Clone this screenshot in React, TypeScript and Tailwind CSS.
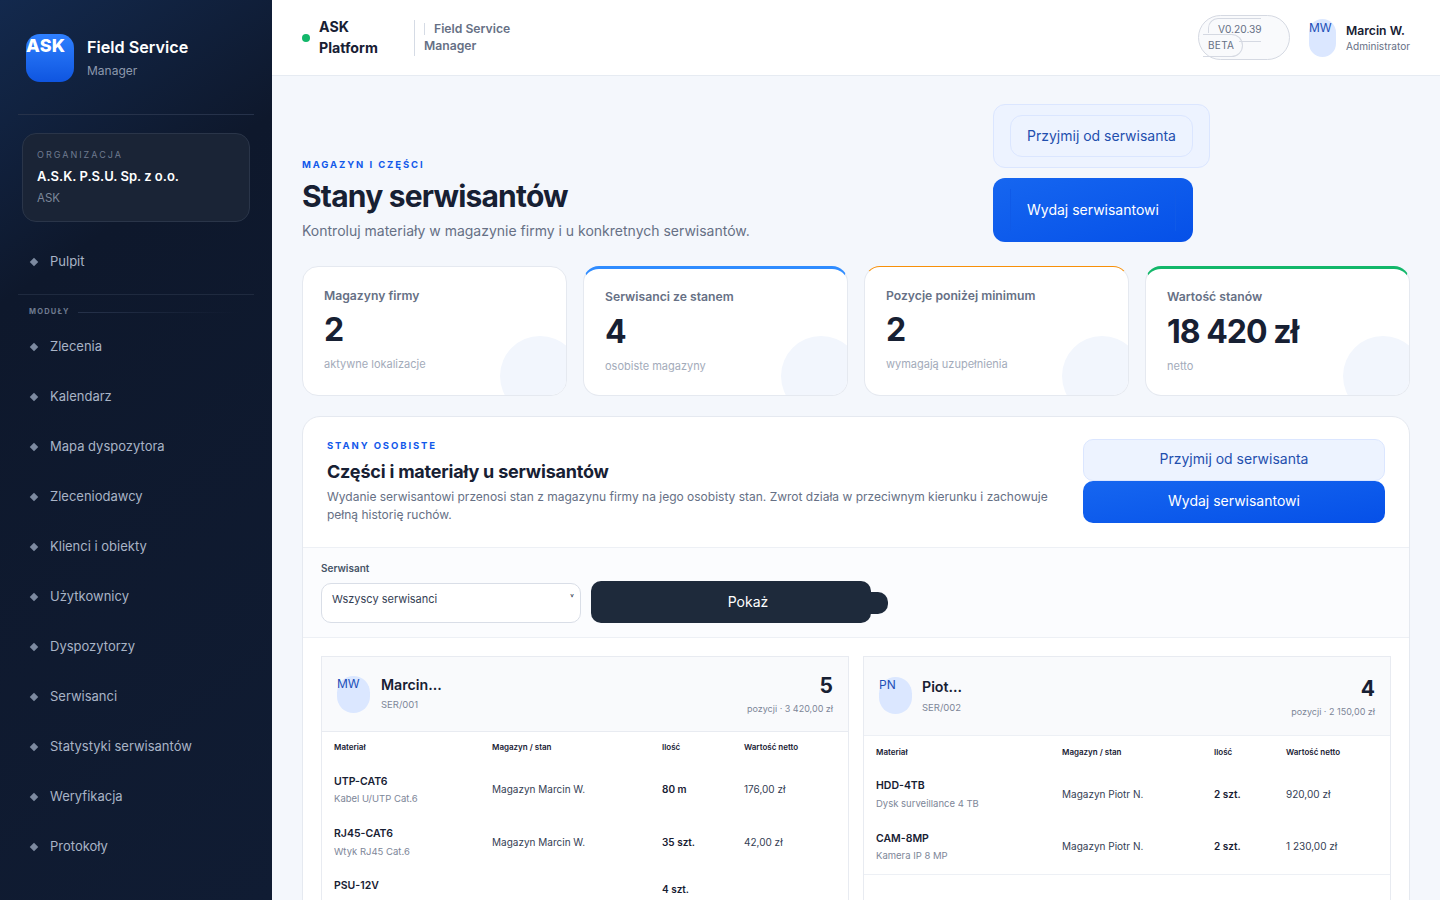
const NAV = [
  "Zlecenia",
  "Kalendarz",
  "Mapa dyspozytora",
  "Zleceniodawcy",
  "Klienci i obiekty",
  "Użytkownicy",
  "Dyspozytorzy",
  "Serwisanci",
  "Statystyki serwisantów",
  "Weryfikacja",
  "Protokoły",
];

const NavItem = ({ label }: { label: string }) => (
  <div className="flex h-[50px] items-center gap-[13px] pl-[13px] text-[13px] text-[#a9b4c6]">
    <span className="h-[6px] w-[6px] rotate-45 bg-[#7d8aa0]" />
    {label}
  </div>
);

const Sidebar = () => (
  <aside className="h-[900px] w-[272px] shrink-0 overflow-hidden bg-[linear-gradient(145deg,#13294d_0%,#0e182c_28%,#101c33_100%)] px-[18px]">
    <div className="flex h-[115px] items-start gap-[13px] border-b border-[#26324a] pl-2 pt-[34px]">
      <div className="h-12 w-12 rounded-[14px] bg-gradient-to-b from-[#2f80ff] to-[#0f55e0] text-[18px] font-extrabold leading-[23px] tracking-[0.2px] text-white">
        ASK
      </div>
      <div>
        <div className="mt-[1px] text-[16.2px] font-semibold leading-[24px] text-white">Field Service</div>
        <div className="mt-[4px] text-[12px] leading-[16px] text-[#8d99ad]">Manager</div>
      </div>
    </div>
    <div className="mx-1 mt-[18px] h-[89px] rounded-[14px] border border-[#2a3549] bg-[#1a2436] px-[14px] pt-[14px]">
      <div className="text-[9px] leading-[14px] tracking-[2px] text-[#6f7b90]">ORGANIZACJA</div>
      <div className="mt-[5px] text-[13px] font-semibold leading-[18px] text-white">A.S.K. P.S.U. Sp. z o.o.</div>
      <div className="mt-[5px] text-[11.5px] leading-[16px] text-[#7d889b]">ASK</div>
    </div>
    <div className="mt-[15px] border-b border-[#1f2a3f] pb-[7px]">
      <NavItem label="Pulpit" />
    </div>
    <div className="flex h-[34px] items-center gap-2 pl-[11px]">
      <span className="text-[7.5px] font-bold tracking-[1.2px] text-[#6f7b90]">MODUŁY</span>
      <span className="h-px w-[160px] bg-gradient-to-r from-[#26324a] to-transparent" />
    </div>
    <div className="-mt-[7px]">
      {NAV.map((n) => (
        <NavItem key={n} label={n} />
      ))}
    </div>
  </aside>
);

const Topbar = () => (
  <header className="flex h-[76px] shrink-0 items-center justify-between border-b border-[#e6ebf2] bg-white pl-[30px] pr-[30px]">
    <div className="flex items-center">
      <span className="h-2 w-2 rounded-full bg-[#12b76a]" />
      <div className="mb-[2px] ml-[9px] w-[95px] text-[14.2px] font-bold leading-[21px] text-[#172033]">
        ASK
        <br />
        Platform
      </div>
      <div className="h-[36px] w-px bg-[#d5dbe5]" />
      <div className="mb-[2px] ml-[9px] w-[100px] text-[12.2px] font-semibold leading-[17px] text-[#667085]">
        <span className="mr-[9px] inline-block h-[12px] w-px bg-[#d5dbe5] align-middle" />
        Field Service Manager
      </div>
    </div>
    <div className="flex items-center">
      <div className="relative h-[45px] w-[92px] rounded-full border border-[#d5d9e2] bg-[#f9fafc] text-[10.2px] text-[#667085]">
        <span className="absolute left-[9px] top-[2px] h-[15px] w-[53px] rounded-tl-[10px] border-l border-t border-[#d5d9e2]" />
        <span className="absolute left-[19px] top-[7px] leading-[13px]">V0.20.39</span>
        <span className="absolute left-[40px] top-[25px] h-px w-[22px] bg-[#d5d9e2]" />
        <span className="absolute left-[4px] top-[18px] h-[23px] w-[40px] rounded-r-full border-b border-r border-t border-[#d5d9e2] pl-[5px] text-[10px] leading-[21px] tracking-[0.3px]">BETA</span>
      </div>
      <div className="ml-[19px] h-[38px] w-[27px] rounded-full bg-[#dbe7ff] text-[12px] leading-[18px] text-[#1d4fb8]">MW</div>
      <div className="ml-[10px] w-[64px] whitespace-nowrap">
        <div className="text-[12.2px] font-semibold leading-[18px] text-[#172033]">Marcin W.</div>
        <div className="-mt-[1px] text-[10.1px] leading-[14px] text-[#667085]">Administrator</div>
      </div>
    </div>
  </header>
);

const STATS = [
  { t: "Magazyny firmy", v: "2", s: "aktywne lokalizacje", bar: "" },
  { t: "Serwisanci ze stanem", v: "4", s: "osobiste magazyny", bar: "border-t-[3px] border-t-[#2f8cff]" },
  { t: "Pozycje poniżej minimum", v: "2", s: "wymagają uzupełnienia", bar: "border-t-[1px] border-t-[#f79009]" },
  { t: "Wartość stanów", v: "18 420 zł", s: "netto", bar: "border-t-[3px] border-t-[#12b76a]" },
];

const StatCard = ({ t, v, s, bar }: { t: string; v: string; s: string; bar: string }) => {
  const thick = bar.includes("3px");
  return (
    <div className={`relative h-[130px] overflow-hidden rounded-[16px] border border-[#e5e9f0] bg-white pl-[21px] ${thick ? "pt-[20px]" : "pt-[21px]"} ${bar}`}>
      <div className="text-[12.2px] font-semibold leading-[16px] text-[#667085]">{t}</div>
      <div className={`text-[32px] font-bold leading-[40px] tracking-[-1px] text-[#172033] ${thick ? "mt-[7px]" : "mt-[6px]"}`}>{v}</div>
      <div className="mt-[6px] text-[11px] leading-[16px] text-[#a3abba]">{s}</div>
      <div className={`absolute left-[197px] h-[80px] w-[80px] rounded-full bg-[#f2f6fd] ${thick ? "top-[67px]" : "top-[69px]"}`} />
    </div>
  );
};

type Row = { code: string; name: string; wh: string; qty: string; val: string };

const RowLine = ({ r, cols, h, low }: { r: Row; cols: string; h: string; low?: boolean }) => {
  const gap = low ? "mb-[1px]" : "mb-[2px]";
  return (
    <div className={`grid items-center ${cols} ${h}`}>
      <div>
        <div className="text-[10.5px] font-semibold leading-[14px] text-[#172033]">{r.code}</div>
        <div className={`text-[9.5px] leading-[14px] text-[#7d8698] ${low ? "mt-[4px]" : "mt-[3px]"}`}>{r.name}</div>
      </div>
      <div className={`text-[10px] text-[#344054] ${gap}`}>{r.wh}</div>
      <div className={`text-[10px] font-semibold text-[#172033] ${gap}`}>{r.qty}</div>
      <div className={`text-[10px] text-[#344054] ${gap}`}>{r.val}</div>
    </div>
  );
};

const TableHead = ({ cols, h }: { cols: string; h: string }) => (
  <div className={`grid items-center text-[8px] font-semibold text-[#172033] ${cols} ${h}`}>
    <div>Materiał</div>
    <div>Magazyn / stan</div>
    <div>Ilość</div>
    <div>Wartość netto</div>
  </div>
);

const Avatar = ({ txt }: { txt: string }) => (
  <div className="h-[37px] w-[33px] shrink-0 rounded-full bg-[#dbe7ff] text-[12px] leading-[16px] text-[#1d4fb8]">{txt}</div>
);

const App = () => (
  <div className="flex h-[900px] w-[1440px] overflow-hidden bg-[#f4f7fc] font-['Inter',sans-serif]">
    <Sidebar />
    <div className="flex min-w-0 flex-1 flex-col">
      <Topbar />
      <main className="px-[30px]">
        <section className="flex h-[190px] items-start">
          <div className="w-[691px] pt-[82px]">
            <div className="text-[9.5px] font-bold leading-[14px] tracking-[1.9px] text-[#1259ea]">MAGAZYN I CZĘŚCI</div>
            <h1 className="mt-[5px] text-[30px] font-bold leading-[38px] tracking-[-0.8px] text-[#172033]">Stany serwisantów</h1>
            <p className="mt-[6px] text-[14px] leading-[20px] text-[#667085]">Kontroluj materiały w magazynie firmy i u konkretnych serwisantów.</p>
          </div>
          <div className="flex flex-col pt-[28px]">
            <div className="h-[64px] w-[217px] rounded-[12px] border border-[#dbe6ff] bg-[#edf3ff] pl-4 pt-[10px]">
              <div className="flex h-[42px] w-[183px] items-center justify-center rounded-[12px] border border-[#dbe6ff] pb-[2px] text-[14px] text-[#1f4fae]">Przyjmij od serwisanta</div>
            </div>
            <div className="mt-[10px] flex h-[64px] w-[200px] items-center justify-center rounded-[12px] bg-gradient-to-br from-[#1666f0] to-[#0650e8] text-[14px] text-white">
              <span className="flex h-[42px] w-[166px] items-center justify-center border-x border-[#0f5ae8] pb-[2px]">Wydaj serwisantowi</span>
            </div>
          </div>
        </section>

        <section className="grid grid-cols-4 gap-4">
          {STATS.map((s) => (
            <StatCard key={s.t} {...s} />
          ))}
        </section>

        <section className="mt-5 overflow-hidden rounded-t-[18px] border border-[#e5e9f0] bg-white">
          <div className="flex h-[131px] justify-between border-b border-[#edf0f5] pl-[24px] pr-[24px] pt-[22px]">
            <div className="w-[725px]">
              <div className="text-[9.5px] font-bold leading-[14px] tracking-[1.9px] text-[#1259ea]">STANY OSOBISTE</div>
              <h2 className="mt-[6px] text-[18px] font-bold leading-[26px] tracking-[-0.2px] text-[#172033]">Części i materiały u serwisantów</h2>
              <p className="mt-[3px] text-[12px] leading-[18px] text-[#667085]">
                Wydanie serwisantowi przenosi stan z magazynu firmy na jego osobisty stan. Zwrot działa w przeciwnym kierunku i zachowuje pełną historię ruchów.
              </p>
            </div>
            <div className="w-[302px]">
              <div className="flex h-[42px] items-center justify-center rounded-[10px] border border-[#dbe6ff] bg-[#edf3ff] pb-[3px] text-[14px] text-[#1f4fae]">Przyjmij od serwisanta</div>
              <div className="flex h-[42px] items-center justify-center rounded-[10px] bg-gradient-to-br from-[#1666f0] to-[#0650e8] pb-[3px] text-[14px] text-white">Wydaj serwisantowi</div>
            </div>
          </div>

          <div className="h-[90px] border-b border-[#edf0f5] bg-[#fbfcfe] px-[18px] pt-[13px]">
            <label className="block text-[10px] font-semibold leading-[14px] text-[#475467]">Serwisant</label>
            <div className="mt-[6px] flex items-start gap-[10px]">
              <div className="relative mt-[2px] h-[40px] w-[260px] rounded-[10px] border border-[#d9dee7] bg-white pl-[10px] pt-[7px] text-[11px] leading-[16px] text-[#344054]">
                Wszyscy serwisanci
                <span className="absolute right-[6px] top-[6px] text-[9px] leading-[14px] text-[#344054]">˅</span>
              </div>
              <div className="relative flex h-[42px] w-[280px] items-center justify-center rounded-[10px] bg-[#1e2a3b] pb-[2px] pl-[34px] text-[14px] text-white">
                Pokaż
                <span className="absolute -right-[17px] top-[11px] h-[22px] w-[20px] rounded-r-[10px] bg-[#1e2a3b]" />
              </div>
            </div>
          </div>

          <div className="grid grid-cols-[528px_528px] gap-[14px] px-[18px] pt-[18px]">
            <div className="h-[300px] border border-[#e8ebf1]">
              <div className="flex h-[75px] items-start justify-between border-b border-[#e8ebf1] bg-[#f9fafc] px-[15px] pt-[19px]">
                <div className="flex gap-[11px]">
                  <Avatar txt="MW" />
                  <div>
                    <div className="text-[14.2px] font-semibold leading-[18px] text-[#172033]">Marcin...</div>
                    <div className="mt-[4px] text-[9.5px] leading-[14px] text-[#7d8698]">SER/001</div>
                  </div>
                </div>
                <div className="w-[90px] text-right">
                  <div className="text-[21px] font-bold leading-[20px] text-[#172033]">5</div>
                  <div className="mt-[6px] whitespace-nowrap text-[9px] leading-[14px] text-[#7d8698]">pozycji · 3 420,00 zł</div>
                </div>
              </div>
              <div className="px-3">
                <TableHead cols="grid-cols-[158px_170px_82px_1fr]" h="h-[29px]" />
                <RowLine cols="grid-cols-[158px_170px_82px_1fr]" h="h-[52px] mt-[3px]" r={{ code: "UTP-CAT6", name: "Kabel U/UTP Cat.6", wh: "Magazyn Marcin W.", qty: "80 m", val: "176,00 zł" }} />
                <RowLine low cols="grid-cols-[158px_170px_82px_1fr]" h="h-[54px]" r={{ code: "RJ45-CAT6", name: "Wtyk RJ45 Cat.6", wh: "Magazyn Marcin W.", qty: "35 szt.", val: "42,00 zł" }} />
                <div className="grid grid-cols-[158px_170px_82px_1fr] items-start pt-[9px]">
                  <div className="text-[10.5px] font-semibold leading-[14px] text-[#172033]">PSU-12V</div>
                  <div />
                  <div className="pt-[2px] text-[10px] font-semibold leading-[16px] text-[#172033]">4 szt.</div>
                </div>
              </div>
            </div>
            <div className="h-[300px] border border-[#e8ebf1]">
              <div className="flex h-[79px] items-start justify-between border-b border-[#edf0f5] bg-[#f9fafc] px-[15px] pt-[20px]">
                <div className="flex gap-[10px]">
                  <Avatar txt="PN" />
                  <div className="pt-[1px]">
                    <div className="text-[14.2px] font-semibold leading-[18px] text-[#172033]">Piot...</div>
                    <div className="mt-[5px] text-[9.5px] leading-[14px] text-[#7d8698]">SER/002</div>
                  </div>
                </div>
                <div className="w-[90px] pt-[1px] text-right">
                  <div className="text-[21px] font-bold leading-[22px] text-[#172033]">4</div>
                  <div className="mt-[5px] whitespace-nowrap text-[9px] leading-[14px] text-[#7d8698]">pozycji · 2 150,00 zł</div>
                </div>
              </div>
              <div className="border-b border-[#edf0f5] px-3 pb-[1px]">
                <TableHead cols="grid-cols-[186px_152px_72px_1fr]" h="h-[31px]" />
                <RowLine low cols="grid-cols-[186px_152px_72px_1fr]" h="h-[54px] mt-[1px]" r={{ code: "HDD-4TB", name: "Dysk surveillance 4 TB", wh: "Magazyn Piotr N.", qty: "2 szt.", val: "920,00 zł" }} />
                <RowLine cols="grid-cols-[186px_152px_72px_1fr]" h="h-[52px] -mt-[1px]" r={{ code: "CAM-8MP", name: "Kamera IP 8 MP", wh: "Magazyn Piotr N.", qty: "2 szt.", val: "1 230,00 zł" }} />
              </div>
            </div>
          </div>
        </section>
      </main>
    </div>
  </div>
);

export default App;
